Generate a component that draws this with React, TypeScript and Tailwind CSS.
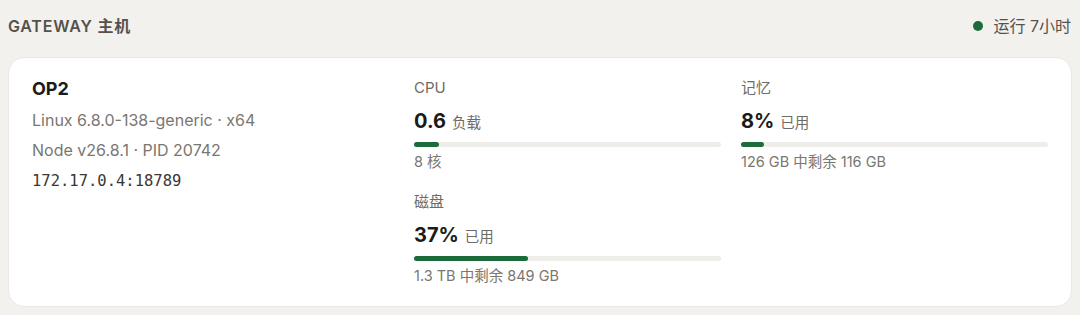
import React from "react";

type Metric = {
	label: string;
	value: string;
	unit: string;
	percent: number;
	detail: string;
};

const cjk = "font-['Inter','Noto_Sans_CJK_SC',sans-serif]";

const MetricBlock = ({ metric }: { metric: Metric }) => {
	return (
		<div className="flex flex-col">
			<div className="text-[15px] leading-5 text-[#6f6b66]">{metric.label}</div>
			<div className="mt-[9px] flex items-baseline gap-[6px] leading-7">
				<span className="text-[20px] font-bold text-[#1c1b19]">{metric.value}</span>
				<span className="text-[14.5px] text-[#6f6b66]">{metric.unit}</span>
			</div>
			<div className="mt-[5px] h-[5px] w-full rounded-full bg-[#efede9]">
				<div
					className="h-full rounded-full bg-[#1d6b3a]"
					style={{ width: `${metric.percent}%` }}
				/>
			</div>
			<div className="mt-[5px] text-[14.5px] leading-5 text-[#7a7670]">{metric.detail}</div>
		</div>
	);
};

export default function App() {
	const cpu: Metric = { label: "CPU", value: "0.6", unit: "负载", percent: 8, detail: "8 核" };
	const mem: Metric = { label: "记忆", value: "8%", unit: "已用", percent: 7.5, detail: "126 GB 中剩余 116 GB" };
	const disk: Metric = { label: "磁盘", value: "37%", unit: "已用", percent: 37, detail: "1.3 TB 中剩余 849 GB" };

	return (
		<div className={`h-[315px] w-[1080px] bg-[#f3f1ee] px-[8px] ${cjk}`}>
			<div className="flex h-[50px] items-center justify-between pt-[1px]">
				<h2 className="text-[16px] font-semibold tracking-[0.05em] text-[#55524d]">GATEWAY 主机</h2>
				<div className="flex items-center gap-[10px] pr-[1px] text-[16px] text-[#55524d]">
					<span className="h-[10px] w-[10px] rounded-full bg-[#1d6b3a]" />
					<span>运行 7小时</span>
				</div>
			</div>
			<div className="mt-[7px] grid h-[250px] grid-cols-[1fr_307px_307px] gap-x-5 rounded-2xl border border-[#ebe8e3] bg-white px-[23px] pt-[20px]">
				<div className="flex flex-col">
					<div className="text-[18px] font-bold leading-[22px] text-[#1c1b19]">OP2</div>
					<div className="mt-[10px] text-[16px] leading-5 text-[#7a7670]">Linux 6.8.0-138-generic · x64</div>
					<div className="mt-[10px] text-[16px] leading-5 text-[#7a7670]">Node v26.8.1 · PID 20742</div>
					<div className="mt-[11px] font-['DejaVu_Sans_Mono',monospace] text-[15.5px] leading-5 text-[#3a3835]">
						172.17.0.4:18789
					</div>
				</div>
				<div className="flex flex-col">
					<MetricBlock metric={cpu} />
					<div className="mt-[20px]">
						<MetricBlock metric={disk} />
					</div>
				</div>
				<div className="flex flex-col">
					<MetricBlock metric={mem} />
				</div>
			</div>
		</div>
	);
}
